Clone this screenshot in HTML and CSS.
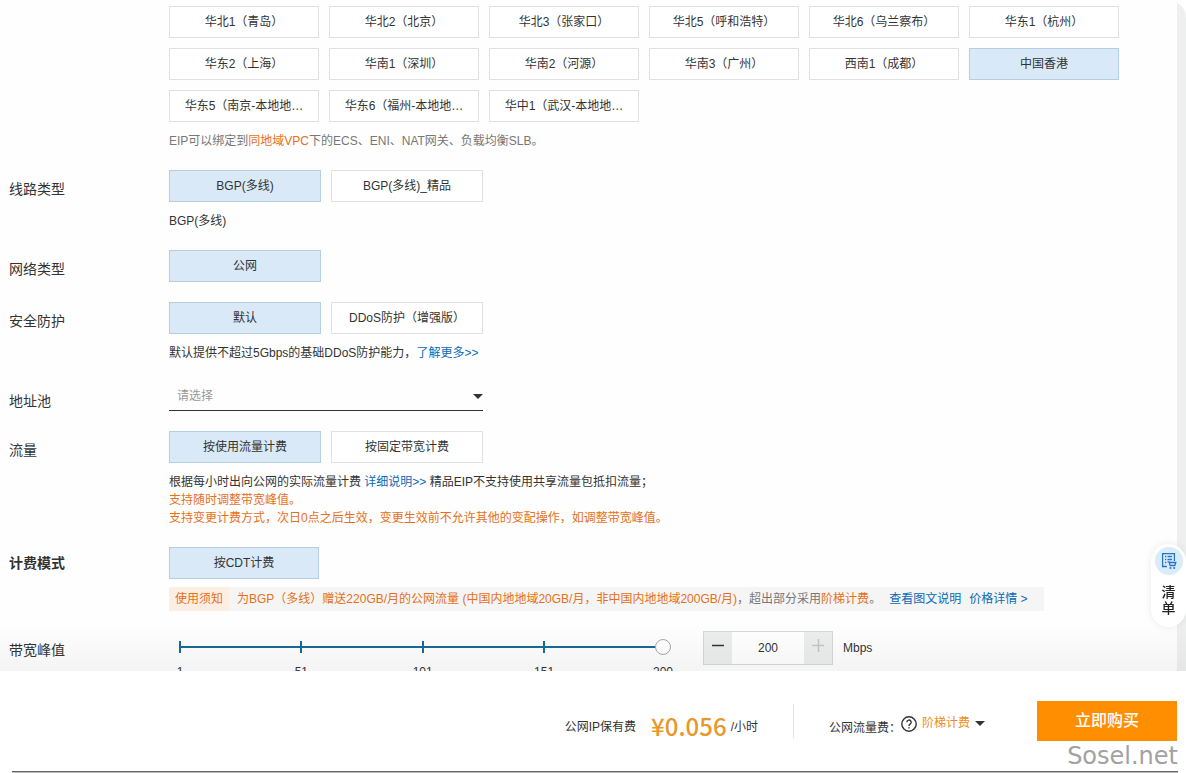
FILE: index.html
```html
<!DOCTYPE html>
<html lang="zh-CN">
<head>
    <meta charset="UTF-8">
    <meta name="viewport" content="width=device-width, initial-scale=1.0">
    <title>弹性公网IP</title>
    <link rel="stylesheet" href="styles.css">
</head>
<body>
    <main class="content">
        <form class="panel">
            <div class="row">
                <div class="row-label"></div>
                <div class="row-body">
                    <div class="regions">
                        <button type="button" class="option">华北1（青岛）</button>
                        <button type="button" class="option">华北2（北京）</button>
                        <button type="button" class="option">华北3（张家口）</button>
                        <button type="button" class="option">华北5（呼和浩特）</button>
                        <button type="button" class="option">华北6（乌兰察布）</button>
                        <button type="button" class="option">华东1（杭州）</button>
                        <button type="button" class="option">华东2（上海）</button>
                        <button type="button" class="option">华南1（深圳）</button>
                        <button type="button" class="option">华南2（河源）</button>
                        <button type="button" class="option">华南3（广州）</button>
                        <button type="button" class="option">西南1（成都）</button>
                        <button type="button" class="option selected">中国香港</button>
                        <button type="button" class="option">华东5（南京-本地地…</button>
                        <button type="button" class="option">华东6（福州-本地地…</button>
                        <button type="button" class="option">华中1（武汉-本地地…</button>
                    </div>
                    <p class="hint muted">EIP可以绑定到<span class="orange">同地域VPC</span>下的ECS、ENI、NAT网关、负载均衡SLB。</p>
                </div>
            </div>

            <div class="row">
                <div class="row-label">线路类型</div>
                <div class="row-body">
                    <div class="options">
                        <button type="button" class="option selected">BGP(多线)</button>
                        <button type="button" class="option">BGP(多线)_精品</button>
                    </div>
                    <p class="hint">BGP(多线)</p>
                </div>
            </div>

            <div class="row">
                <div class="row-label">网络类型</div>
                <div class="row-body">
                    <div class="options">
                        <button type="button" class="option selected">公网</button>
                    </div>
                </div>
            </div>

            <div class="row">
                <div class="row-label">安全防护</div>
                <div class="row-body">
                    <div class="options">
                        <button type="button" class="option selected">默认</button>
                        <button type="button" class="option">DDoS防护（增强版）</button>
                    </div>
                    <p class="hint">默认提供不超过5Gbps的基础DDoS防护能力，<a href="#">了解更多&gt;&gt;</a></p>
                </div>
            </div>

            <div class="row">
                <label class="row-label" for="pool">地址池</label>
                <div class="row-body">
                    <div class="select-box">
                        <select id="pool">
                            <option>请选择</option>
                        </select>
                        <span class="caret"></span>
                    </div>
                </div>
            </div>

            <div class="row">
                <div class="row-label">流量</div>
                <div class="row-body">
                    <div class="options">
                        <button type="button" class="option selected">按使用流量计费</button>
                        <button type="button" class="option">按固定带宽计费</button>
                    </div>
                    <p class="hint">根据每小时出向公网的实际流量计费 <a href="#">详细说明&gt;&gt;</a> 精品EIP不支持使用共享流量包抵扣流量；<br>
                        <span class="orange">支持随时调整带宽峰值。<br>
                        支持变更计费方式，次日0点之后生效，变更生效前不允许其他的变配操作，如调整带宽峰值。</span></p>
                </div>
            </div>

            <div class="row">
                <div class="row-label strong">计费模式</div>
                <div class="row-body">
                    <div class="options narrow">
                        <button type="button" class="option selected">按CDT计费</button>
                    </div>
                    <div class="notice">
                        <span class="notice-tag">使用须知</span>
                        <p class="notice-text"><span class="orange">为BGP（多线）赠送220GB/月的公网流量 (中国内地地域20GB/月，非中国内地地域200GB/月)</span>，超出部分采用<span class="orange">阶梯计费</span>。</p>
                        <a href="#">查看图文说明</a>
                        <a href="#">价格详情 &gt;</a>
                    </div>
                </div>
            </div>

            <div class="row">
                <label class="row-label" for="bandwidth">带宽峰值</label>
                <div class="row-body bandwidth">
                    <div class="slider">
                        <div class="ticks"><i></i><i></i><i></i><i></i><i></i></div>
                        <input type="range" id="bandwidth" min="1" max="200" value="200">
                        <div class="tick-labels"><span>1</span><span>51</span><span>101</span><span>151</span><span>200</span></div>
                    </div>
                    <div class="stepper">
                        <button type="button" aria-label="减少">
                            <svg width="14" height="14" viewBox="0 0 14 14"><path d="M1 6.5h12" stroke="#333" stroke-width="1.5"/></svg>
                        </button>
                        <input type="text" value="200" aria-label="带宽">
                        <button type="button" aria-label="增加" disabled>
                            <svg width="14" height="14" viewBox="0 0 14 14"><path d="M1 6.5h12M7.500 0v13" stroke="#c3c5c6" stroke-width="1.500"/></svg>
                        </button>
                    </div>
                    <span class="unit">Mbps</span>
                </div>
            </div>
        </form>
    </main>

    <a href="#" class="side-tab">
        <span class="side-icon">
            <svg width="16" height="18" viewBox="0 0 16 18" fill="none" stroke="#2277c4" stroke-width="1.3">
                <path d="M6 14.500H1.600V1.600H13.400V9"/>
                <path d="M4 4.500h1.300M6.500 4.500h4.500M4 7.500h1.300M6.500 7.500h4.500M4 10.500h1.300"/>
                <path d="M6.500 9.800h1.600l1 3.700h4.700l1-3H8.400"/>
                <circle cx="9.500" cy="16" r=".4"/>
                <circle cx="13.200" cy="16" r=".4"/>
            </svg>
        </span>
        <span class="side-text">清单</span>
    </a>

    <footer class="buy-bar">
        <div class="fee">
            <span>公网IP保有费</span>
            <strong class="price">¥0.056</strong>
            <span>/小时</span>
        </div>
        <div class="traffic">
            <span class="traffic-label">公网流量费：</span>
            <svg class="help" width="16" height="16" viewBox="0 0 16 16" fill="none" stroke="#333" stroke-width="1.4">
                <circle cx="8" cy="8" r="7.200"/>
                <path d="M5.800 6.300a2.200 2.200 0 1 1 3.300 1.900C8.300 8.700 8 9 8 9.900"/>
                <path d="M8 11.200v1.400"/>
            </svg>
            <button type="button" class="ladder">阶梯计费<span class="caret"></span></button>
        </div>
        <button type="submit" class="buy">立即购买</button>
        <span class="watermark">Sosel.net</span>
    </footer>
    <div class="bottom-line"></div>
</body>
</html>
```
FILE: styles.css
```css
* {
    box-sizing: border-box;
}
body {
    margin: 0;
    height: 100vh;
    display: flex;
    flex-direction: column;
    overflow: hidden;
    background: #fff;
    color: #333;
    font: 12px/18px "Liberation Sans", "Noto Sans CJK SC", sans-serif;
}
button, input, select {
    font: inherit;
    color: inherit;
}
p {
    margin: 0;
}
a {
    color: #0a6ab5;
    text-decoration: none;
}
.orange {
    color: #e6701a;
}
.content {
    position: relative;
    flex: 1;
    min-height: 0;
    overflow: hidden;
    padding-right: 9px;
    background: #eeefef;
    border-radius: 0 18px 0 0;
}
/* fade above the buy bar */
.content::after {
    content: "";
    position: absolute;
    left: 0;
    right: 0;
    bottom: 0;
    height: 48px;
    background: linear-gradient(rgba(0, 0, 0, 0), rgba(0, 0, 0, 0.04));
    pointer-events: none;
}
.panel {
    min-height: 100%;
    padding: 6px 0 0 9px;
    background: #fefefe;
}
.row {
    display: flex;
    margin-bottom: 20px;
}
.row-label {
    flex: 0 0 160px;
    padding-top: 9px;
    font-size: 14px;
    line-height: 20px;
}
.row-label.strong {
    padding-top: 6px;
    font-weight: bold;
}
.row-body {
    flex: 1;
    min-width: 0;
}
.regions {
    display: grid;
    grid-template-columns: repeat(auto-fill, 150px);
    gap: 10px;
}
.options {
    display: grid;
    grid-template-columns: repeat(auto-fill, 152px);
    gap: 10px;
}
.options.narrow {
    grid-template-columns: 150px;
}
.option {
    height: 32px;
    padding: 0;
    border: 1px solid #e0e2e2;
    background: #fff;
    white-space: nowrap;
    cursor: pointer;
}
.option.selected {
    border-color: #b4cfdf;
    background: #d9e9f7;
}
.hint {
    margin-top: 10px;
}
.muted {
    color: #777;
}
.caret {
    border: 5px solid transparent;
    border-top-color: #333;
    border-bottom: 0;
}
.select-box {
    display: flex;
    align-items: center;
    width: 314px;
    border-bottom: 1px solid #333;
}
.select-box select {
    flex: 1;
    height: 28px;
    padding: 0 8px;
    border: 0;
    background: none;
    color: #999;
    appearance: none;
}
.notice {
    display: inline-flex;
    margin-top: 8px;
    padding-right: 16px;
    background: #f5f5f5;
    color: #777;
    line-height: 24px;
    vertical-align: top;
    white-space: nowrap;
}
.notice-tag {
    margin-right: 8px;
    padding: 0 6px;
    background: #fdeee4;
    color: #e6701a;
}
.notice a {
    margin-left: 8px;
}
.bandwidth {
    display: flex;
}
.slider {
    position: relative;
    width: 502px;
    margin-right: 32px;
    padding: 8px 0 0 3px;
}
.slider input {
    display: block;
    position: relative;
    width: 100%;
    height: 16px;
    margin: 0;
    background: none;
    appearance: none;
}
.slider input::-webkit-slider-thumb {
    width: 16px;
    height: 16px;
    border: 1px solid #aaa;
    border-radius: 50%;
    background: #fff;
    appearance: none;
}
/* track line with its tick marks, drawn under the range input */
.ticks {
    position: absolute;
    left: 10px;
    right: 7px;
    top: 10px;
    display: grid;
    grid-template-columns: 50fr 50fr 50fr 49fr 2px;
    background: linear-gradient(#166a98, #166a98) 0 5px / 100% 2px no-repeat;
}
.ticks i {
    width: 2px;
    height: 12px;
    background: #166a98;
}
.tick-labels {
    display: grid;
    grid-template-columns: 50fr 50fr 50fr 49fr 16px;
    margin-top: 8px;
}
.tick-labels span {
    width: 16px;
    display: flex;
    justify-content: center;
}
.stepper {
    display: flex;
    height: 34px;
    border: 1px solid #d5d7d8;
}
.stepper button {
    display: flex;
    align-items: center;
    justify-content: center;
    width: 28px;
    padding: 0 0 4px;
    border: 0;
    background: #eceded;
}
.stepper input {
    width: 72px;
    border: 0;
    background: #fff;
    text-align: center;
}
.unit {
    margin-left: 10px;
    line-height: 34px;
}
.side-tab {
    position: fixed;
    right: 0;
    bottom: 146px;
    display: flex;
    flex-direction: column;
    align-items: center;
    width: 35px;
    padding: 3px 3px 12px;
    border-radius: 18px;
    background: #fff;
    box-shadow: 0 0 8px rgba(0, 0, 0, 0.08);
    color: #222;
}
.side-icon {
    display: flex;
    align-items: center;
    justify-content: center;
    width: 28px;
    height: 28px;
    border-radius: 50%;
    background: #dcebfa;
}
.side-text {
    width: 14px;
    margin-top: 8px;
    font: 500 14px/16px "Noto Sans CJK SC", sans-serif;
}
.buy-bar {
    position: relative;
    display: flex;
    align-items: center;
    justify-content: flex-end;
    height: 100px;
    padding-right: 9px;
    background: #fff;
}
.fee {
    display: flex;
    align-items: center;
    height: 34px;
    padding: 12px 35px 0 0;
    border-right: 1px solid #e5e5e5;
}
.price {
    margin: 0 4px 0 15px;
    padding-bottom: 2px;
    color: #e8972c;
    font: 500 24px/34px "Noto Sans CJK SC", sans-serif;
}
.traffic {
    display: flex;
    align-items: center;
    padding: 6px 52px 0 35px;
}
.traffic-label {
    padding-top: 8px;
}
.help {
    margin-right: 5px;
}
.ladder {
    display: flex;
    align-items: center;
    gap: 5px;
    padding: 0 0 2px;
    border: 0;
    background: none;
    color: #ec8f1c;
}
.buy {
    width: 140px;
    height: 40px;
    border: 0;
    background: #ff8f00;
    color: #fff;
    font-size: 16px;
    font-weight: 500;
    cursor: pointer;
}
.watermark {
    position: absolute;
    right: 8px;
    bottom: 0;
    color: #a2a2a2;
    font: 24px/30px "DejaVu Sans", sans-serif;
}
.bottom-line {
    height: 2px;
    margin: 0 8px 0 12px;
    border-top: 1px solid #666;
    background: #bbb;
}
```
